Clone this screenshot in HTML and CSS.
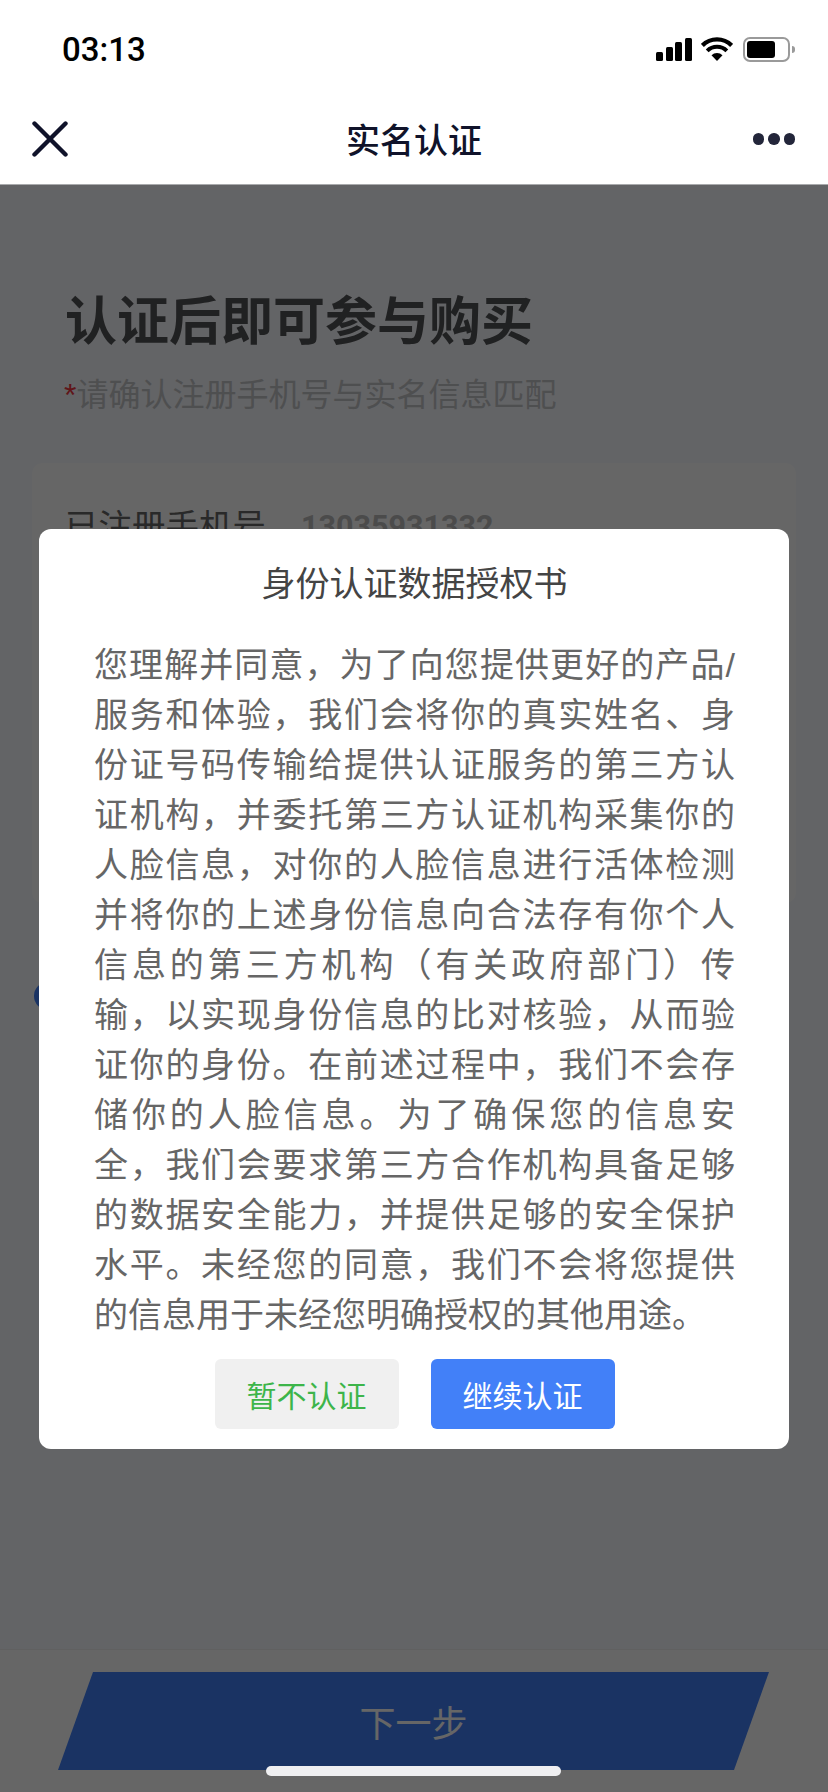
FILE: index.html
```html
<!DOCTYPE html>
<html lang="zh-CN">
<head>
<meta charset="utf-8">
<title>实名认证</title>
<link rel="stylesheet" href="styles.css">
</head>
<body>
<div class="screen">
  <header class="status">
    <span class="time">03:13</span>
    <div class="status-icons">
      <div class="signal"><i class="b1"></i><i class="b2"></i><i class="b3"></i><i class="b4"></i></div>
      <svg class="wifi" viewBox="0 0 32 24" width="32" height="24"><path d="M16 24l-5.500-5.700a7.800 7.800 0 0 1 11 0z" fill="#000"/><path d="M6.200 13.800a13.900 13.900 0 0 1 19.600 0" fill="none" stroke="#000" stroke-width="4"/><path d="M1.400 8.400a20.800 20.800 0 0 1 29.200 0" fill="none" stroke="#000" stroke-width="4.200"/></svg>
      <div class="battery"><div class="battery-body"><div class="battery-fill"></div></div><div class="battery-nub"></div></div>
    </div>
  </header>
  <nav class="navbar">
    <svg class="close" viewBox="0 0 36 36" width="36" height="36"><path d="M2.500 2.500L33.500 33.500M33.500 2.500L2.500 33.500" fill="none" stroke="#10132a" stroke-width="4.400" stroke-linecap="round"/></svg>
    <h1 class="nav-title">实名认证</h1>
    <div class="more"><i></i><i></i><i></i></div>
  </nav>
  <main class="page">
    <div class="content">
      <h2 class="headline">认证后即可参与购买</h2>
      <p class="sub"><span class="star">*</span>请确认注册手机号与实名信息匹配</p>
      <section class="card">
        <div class="row"><span class="label">已注册手机号</span><span class="phone">13035931332</span></div>
      </section>
      <div class="agree"><i class="dot"></i></div>
    </div>
    <footer class="footer">
      <button class="next"><span>下一步</span></button>
    </footer>
    <div class="overlay">
      <div class="modal">
        <h3 class="modal-title">身份认证数据授权书</h3>
        <p class="modal-text">您理解并同意，为了向您提供更好的产品/服务和体验，我们会将你的真实姓名、身份证号码传输给提供认证服务的第三方认证机构，并委托第三方认证机构采集你的人脸信息，对你的人脸信息进行活体检测并将你的上述身份信息向合法存有你个人信息的第三方机构（有关政府部门）传输，以实现身份信息的比对核验，从而验证你的身份。在前述过程中，我们不会存储你的人脸信息。为了确保您的信息安全，我们会要求第三方合作机构具备足够的数据安全能力，并提供足够的安全保护水平。未经您的同意，我们不会将您提供的信息用于未经您明确授权的其他用途。</p>
        <div class="actions">
          <button class="btn btn-later">暂不认证</button>
          <button class="btn btn-go">继续认证</button>
        </div>
      </div>
    </div>
  </main>
  <div class="home"></div>
</div>
</body>
</html>
```
FILE: styles.css
```css
* { box-sizing: border-box; }
html, body { margin: 0; padding: 0; }
body { font-family: "Liberation Sans", "Noto Sans CJK SC", sans-serif; background: #fff; }
.screen { position: relative; width: 828px; height: 1792px; overflow: hidden; display: flex; flex-direction: column; background: #fff; }

.status { height: 96px; flex: none; display: flex; justify-content: space-between; align-items: flex-start; padding: 31px 33px 0 62px; }
.time { font-family: Roboto, "Liberation Sans", sans-serif; font-weight: 500; font-size: 33px; line-height: 38px; color: #000; }
.status-icons { display: flex; align-items: flex-start; padding-top: 6px; }
.signal { display: flex; align-items: flex-end; gap: 2.600px; height: 23px; margin-top: 1px; margin-right: 9px; }
.signal i { display: block; width: 7px; border-radius: 1.500px; background: #000; }
.b1 { height: 9px; } .b2 { height: 14px; } .b3 { height: 19px; } .b4 { height: 23px; }
.wifi { display: block; margin-right: 10px; }
.battery { display: flex; align-items: center; height: 25px; }
.battery-body { width: 47px; height: 25px; border: 2.500px solid #9a9a9a; border-radius: 7px; padding: 2px; }
.battery-fill { width: 28px; height: 100%; background: #000; border-radius: 3px; }
.battery-nub { width: 3px; height: 7px; margin-left: 2px; background: #9a9a9a; border-radius: 0 3px 3px 0; }

.navbar { position: relative; height: 89px; flex: none; display: flex; justify-content: space-between; align-items: center; padding: 0 33px 2px 32px; border-bottom: 1px solid #a9aaac; }
.close { display: block; }
.nav-title { position: absolute; left: 0; right: 0; top: 0; bottom: 4px; margin: 0; display: flex; align-items: center; justify-content: center; font-size: 34px; font-weight: 500; color: #10132a; }
.more { display: flex; gap: 4px; }
.more i { display: block; width: 11.500px; height: 11.500px; border-radius: 50%; background: #23263a; }

.page { position: relative; flex: 1; display: flex; flex-direction: column; background: #f7f9fe; min-height: 0; }
.content { flex: 1; padding: 105px 32px 0; display: flex; flex-direction: column; min-height: 0; }
.headline { margin: 0 0 0 33px; font-size: 52px; line-height: 64px; font-weight: 700; color: #525355; }
.sub { margin: 21px 0 0 32px; font-size: 32px; line-height: 40px; color: #c4c5c8; }
.star { color: #f0353f; }
.card { margin-top: 48px; height: 440px; background: #fff; border-radius: 10px; padding: 40px 33px 0; }
.row { display: flex; align-items: center; gap: 35px; }
.label { font-size: 33.500px; line-height: 48px; color: #666; }
.phone { font-family: Roboto, "Liberation Sans", sans-serif; font-weight: 700; font-size: 30.500px; line-height: 48px; color: #bbb; }
.agree { margin-top: 79px; }
.dot { display: block; margin-left: 2px; width: 28px; height: 28px; border-radius: 50%; background: #4280f8; }

.footer { flex: none; height: 143px; background: #fff; border-top: 1px solid #f0f0f0; padding: 22px 0 0 58px; }
.next { display: flex; align-items: center; justify-content: center; width: 711px; height: 98px; padding: 0; border: 0; background: #4280f8; clip-path: polygon(35px 0, 100% 0, 676px 100%, 0 100%); color: #fff; font-family: inherit; font-size: 36px; }

.overlay { position: absolute; inset: 0; display: flex; align-items: center; justify-content: center; background: rgba(0, 0, 0, 0.6); }
.modal { width: 750px; background: #fff; border-radius: 12px; padding: 30px 54px 20px 55px; display: flex; flex-direction: column; }
.modal-title { margin: 0; font-size: 34px; line-height: 50px; font-weight: 400; color: #444; text-align: center; }
.modal-text { margin: 31px 0 0; font-size: 34px; line-height: 50px; color: #666; text-align: justify; }
.actions { display: flex; justify-content: center; gap: 32px; margin-top: 19px; }
.btn { width: 184px; height: 70px; border: 0; padding: 0; border-radius: 6px; font-family: inherit; font-size: 30px; }
.btn-later { background: #f0f0f0; color: #3db54a; }
.btn-go { background: #4280f8; color: #fff; }

.home { position: absolute; left: 266px; bottom: 16px; width: 295px; height: 10px; border-radius: 5px; background: #efeff1; }
```
